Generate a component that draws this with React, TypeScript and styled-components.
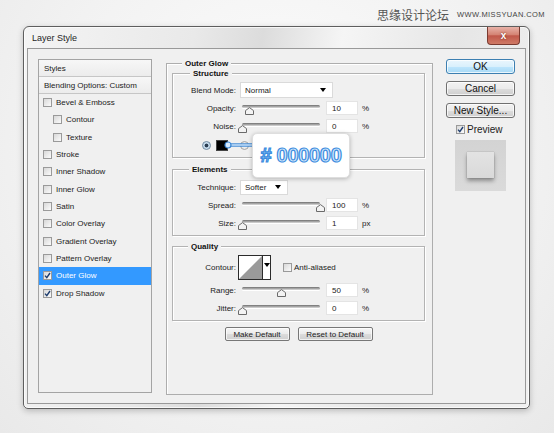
import styled, { createGlobalStyle } from "styled-components";

const GlobalStyle = createGlobalStyle`
  html, body {
    margin: 0;
    padding: 0;
  }
  body {
    font-family: "Liberation Sans", Arial, sans-serif;
    color: #222;
  }
`;

const Page = styled.div`
  width: 554px;
  height: 433px;
  overflow: hidden;
  background: radial-gradient(ellipse at 50% 35%, #fdfdfd 0%, #f2f2f2 60%, #e9e9e9 100%);
`;

const Watermark = styled.div`
  height: 26px;
  box-sizing: border-box;
  padding: 3px 9px 0 0;
  display: flex;
  justify-content: flex-end;
  align-items: center;
  gap: 8px;
`;

const WatermarkCn = styled.span`
  font-family: "Noto Sans CJK SC", sans-serif;
  font-size: 12px;
  color: #555;
`;

const WatermarkEn = styled.span`
  font-family: "Liberation Sans", Arial, sans-serif;
  font-size: 7.5px;
  letter-spacing: 0.4px;
  color: #444;
`;

const Window = styled.div`
  margin-left: 23px;
  width: 507px;
  height: 383px;
  box-sizing: border-box;
  border: 1px solid #5e5e5e;
  border-radius: 6px 6px 5px 5px;
  padding: 0 3px 4px;
  background: linear-gradient(
    100deg,
    #f4f4f4 0%,
    #e9e9e9 30%,
    #dcdcdc 42%,
    #f5f5f5 56%,
    #e6e6e6 76%,
    #f1f1f1 100%
  );
  box-shadow: 0 2px 6px rgba(0, 0, 0, 0.22), inset 0 0 0 1px rgba(255, 255, 255, 0.7);
  display: flex;
  flex-direction: column;
`;

const TitleBar = styled.div`
  height: 21px;
  display: flex;
  justify-content: space-between;
  align-items: flex-start;
  flex-shrink: 0;
`;

const Title = styled.span`
  margin: 6px 0 0 5px;
  font-size: 9px;
  line-height: 10px;
  color: #1f1f1f;
`;

const CloseButton = styled.div`
  width: 33px;
  height: 18px;
  margin-right: 6px;
  box-sizing: border-box;
  border: 1px solid #7a3a30;
  border-top: none;
  border-radius: 0 0 4px 4px;
  background: linear-gradient(#e8b2a8 0%, #d48474 45%, #c0584a 52%, #cf7a66 100%);
  color: #fff;
  font-weight: bold;
  font-size: 10px;
  display: flex;
  align-items: center;
  justify-content: center;
  text-shadow: 0 0 2px #6b1c12;
`;

const Body = styled.div`
  height: 356px;
  box-sizing: border-box;
  border: 1px solid #999;
  background: #f0f0f0;
  padding: 10px 0 0 10px;
  display: flex;
  align-items: flex-start;
`;

/* ---------- left: style list ---------- */

const StylesPanel = styled.div`
  width: 114px;
  height: 334px;
  box-sizing: border-box;
  border: 1px solid #a4a4a4;
  background: #f0f0f0;
  display: flex;
  flex-direction: column;
  flex-shrink: 0;
`;

const PanelHeader = styled.div`
  height: 17px;
  box-sizing: border-box;
  border-bottom: 1px solid #c6c6c6;
  padding-left: 5px;
  display: flex;
  align-items: center;
  font-size: 8px;
  background: linear-gradient(#f7f7f7, #ececec);
`;

const StyleItem = styled.div<{ $indent?: boolean; $selected?: boolean }>`
  height: 17.33px;
  padding-left: ${(p) => (p.$indent ? 14 : 4)}px;
  display: flex;
  align-items: center;
  gap: 4px;
  font-size: 8px;
  background: ${(p) => (p.$selected ? "#3399ff" : "transparent")};
  color: ${(p) => (p.$selected ? "#fff" : "#222")};
`;

const CheckBox = styled.span`
  width: 9px;
  height: 9px;
  box-sizing: border-box;
  border: 1px solid #9a9a9a;
  background: linear-gradient(135deg, #d8d8d8, #fbfbfb);
  display: inline-flex;
  align-items: center;
  justify-content: center;
  flex-shrink: 0;
`;

function Check({ checked }: { checked?: boolean }) {
  return (
    <CheckBox>
      {checked && (
        <svg width="7" height="7" viewBox="0 0 7 7">
          <path d="M1 3.6 L2.8 5.6 L6 1" fill="none" stroke="#1d3c6e" strokeWidth="1.4" />
        </svg>
      )}
    </CheckBox>
  );
}

const styleItems: { label: string; indent?: boolean; checked?: boolean; selected?: boolean }[] = [
  { label: "Bevel & Emboss" },
  { label: "Contour", indent: true },
  { label: "Texture", indent: true },
  { label: "Stroke" },
  { label: "Inner Shadow" },
  { label: "Inner Glow" },
  { label: "Satin" },
  { label: "Color Overlay" },
  { label: "Gradient Overlay" },
  { label: "Pattern Overlay" },
  { label: "Outer Glow", checked: true, selected: true },
  { label: "Drop Shadow", checked: true },
];

/* ---------- middle: settings ---------- */

const MiddlePanel = styled.div`
  margin: 4px 0 0 14px;
  width: 267px;
  height: 332px;
  box-sizing: border-box;
  border: 1px solid #adadad;
  box-shadow: inset 1px 1px 0 #fff;
  padding: 0 7px 0 5px;
  display: flex;
  flex-direction: column;
  flex-shrink: 0;
`;

const Legend = styled.div<{ $offset: number }>`
  align-self: flex-start;
  margin: -5px 0 0 ${(p) => p.$offset}px;
  padding: 0 3px;
  height: 10px;
  line-height: 10px;
  background: #f0f0f0;
  font-size: 8px;
  font-weight: bold;
  color: #111;
`;

const Group = styled.div<{ $mt: number }>`
  margin-top: ${(p) => p.$mt}px;
  border: 1px solid #b3b3b3;
  box-shadow: 1px 1px 0 #fff, inset 1px 1px 0 #fff;
  padding-bottom: 3px;
  display: flex;
  flex-direction: column;
`;

const Row = styled.div<{ $h?: number; $mt?: number }>`
  position: relative;
  height: ${(p) => p.$h ?? 18}px;
  margin-top: ${(p) => p.$mt ?? 0}px;
  display: flex;
  align-items: center;
  font-size: 8px;
`;

const Label = styled.span`
  width: 63px;
  margin-right: 4px;
  text-align: right;
  flex-shrink: 0;
`;

const SelectBox = styled.div<{ $w: number; $h: number }>`
  width: ${(p) => p.$w}px;
  height: ${(p) => p.$h}px;
  box-sizing: border-box;
  border: 1px solid #dadada;
  background: #fff;
  padding: 0 6px 0 4px;
  display: flex;
  align-items: center;
  justify-content: space-between;
`;

const Arrow = styled.span`
  width: 0;
  height: 0;
  border-left: 3px solid transparent;
  border-right: 3px solid transparent;
  border-top: 4px solid #000;
`;

const SliderBox = styled.div`
  position: relative;
  width: 82px;
  height: 14px;
  flex-shrink: 0;
`;

const Track = styled.div`
  position: absolute;
  left: 2px;
  right: 2px;
  top: 4px;
  height: 3px;
  border-radius: 2px;
  background: linear-gradient(#6f6f6f, #a9a9a9 55%, #dedede);
  box-shadow: 0 1px 0 #fff;
`;

const Thumb = styled.svg<{ $pos: number }>`
  position: absolute;
  top: 6px;
  left: ${(p) => 2 + p.$pos * 78 - 4.5}px;
`;

const NumInput = styled.div`
  width: 32px;
  height: 14px;
  box-sizing: border-box;
  margin-left: 4px;
  padding-left: 5px;
  border: 1px solid #e4e4e4;
  background: #fff;
  display: flex;
  align-items: center;
`;

const Unit = styled.span`
  margin-left: 4px;
`;

function Slider({ label, value, unit }: { label: string; value: number; unit: string }) {
  return (
    <Row>
      <Label>{label}</Label>
      <SliderBox>
        <Track />
        <Thumb $pos={value / 100} width="9" height="8" viewBox="0 0 9 8">
          <path d="M0.5 7.5 V3.6 L4.5 0.6 L8.5 3.6 V7.5 Z" fill="#f3f3f3" stroke="#6a6a6a" />
        </Thumb>
      </SliderBox>
      <NumInput>{value}</NumInput>
      <Unit>{unit}</Unit>
    </Row>
  );
}

const Radio = styled.span<{ $on?: boolean; $ml: number }>`
  width: 9px;
  height: 9px;
  margin-left: ${(p) => p.$ml}px;
  box-sizing: border-box;
  border-radius: 50%;
  border: 1px solid ${(p) => (p.$on ? "#6e8aa3" : "#a5a5a5")};
  background: ${(p) =>
    p.$on
      ? "radial-gradient(circle, #2a3d52 0 1.6px, #bcd3e6 2.2px, #e9f2f9 100%)"
      : "radial-gradient(circle, #fafafa, #dcdcdc)"};
  flex-shrink: 0;
`;

const Swatch = styled.span`
  width: 12px;
  height: 11px;
  margin-left: 5px;
  box-sizing: border-box;
  border: 1px solid #444;
  background: #000;
  flex-shrink: 0;
`;

const GradientBar = styled.span`
  width: 60px;
  height: 11px;
  margin-left: 4px;
  border: 1px solid #777;
  background: linear-gradient(90deg, #000, rgba(0, 0, 0, 0));
`;

const Callout = styled.svg`
  position: absolute;
  left: 51px;
  top: 4px;
  z-index: 1;
`;

const Tooltip = styled.div`
  position: absolute;
  left: 79px;
  top: -3px;
  width: 98px;
  height: 45px;
  box-sizing: border-box;
  border: 1px solid #dedede;
  border-radius: 5px;
  background: #fff;
  box-shadow: 0 1px 4px rgba(0, 0, 0, 0.25);
  display: flex;
  align-items: center;
  justify-content: center;
  z-index: 2;
`;

const HexText = styled.span`
  font-family: "Liberation Sans", Arial, sans-serif;
  font-size: 20px;
  font-weight: bold;
  color: #d2e8fc;
  -webkit-text-stroke: 1.2px #3d8ddf;
  letter-spacing: -0.3px;
`;

const ContourPicker = styled.div`
  width: 33px;
  height: 25px;
  margin-left: -2px;
  box-sizing: border-box;
  border: 1px solid #2b2b2b;
  background: #fff;
  display: flex;
`;

const ContourArrow = styled.div`
  width: 8px;
  border-left: 1px solid #2b2b2b;
  display: flex;
  justify-content: center;
  padding-top: 7px;
  box-sizing: border-box;
`;

const AntiAlias = styled.label`
  margin-left: 12px;
  display: flex;
  align-items: center;
  gap: 2px;
`;

const ButtonRow = styled.div`
  margin-top: 6px;
  display: flex;
  justify-content: center;
  gap: 8px;
`;

const SmallButton = styled.div<{ $w: number }>`
  width: ${(p) => p.$w}px;
  height: 14px;
  box-sizing: border-box;
  border: 1px solid #777;
  border-radius: 2px;
  background: linear-gradient(#f6f6f6 0%, #ebebeb 50%, #dcdcdc 51%, #cfcfcf 100%);
  box-shadow: inset 0 0 0 1px rgba(255, 255, 255, 0.7);
  font-size: 8px;
  display: flex;
  align-items: center;
  justify-content: center;
`;

/* ---------- right: buttons & preview ---------- */

const Side = styled.div`
  margin-left: 13px;
  width: 69px;
  display: flex;
  flex-direction: column;
  flex-shrink: 0;
`;

const DialogButton = styled.div<{ $primary?: boolean }>`
  height: 15px;
  box-sizing: border-box;
  margin-bottom: 7px;
  border: 1px solid ${(p) => (p.$primary ? "#3c7fb1" : "#707070")};
  border-radius: 3px;
  background: ${(p) =>
    p.$primary
      ? "linear-gradient(#eaf6fd 0%, #d9f0fc 50%, #bee6fd 51%, #a7d9f5 100%)"
      : "linear-gradient(#f2f2f2 0%, #ebebeb 50%, #dddddd 51%, #cfcfcf 100%)"};
  box-shadow: inset 0 0 0 1px rgba(255, 255, 255, 0.75);
  font-size: 10px;
  color: #111;
  display: flex;
  align-items: center;
  justify-content: center;
`;

const PreviewRow = styled.div`
  margin: -1px 0 0 10px;
  height: 10px;
  display: flex;
  align-items: center;
  gap: 2px;
  font-size: 10px;
`;

const PreviewBox = styled.div`
  margin: 6px 0 0 9px;
  width: 51px;
  height: 51px;
  background: linear-gradient(#d3d3d3, #dadada);
  display: flex;
  align-items: center;
  justify-content: center;
`;

const PreviewSquare = styled.div`
  width: 27px;
  height: 26px;
  margin-top: -2px;
  background: linear-gradient(#e3e3e3, #d9d9d9);
  box-shadow: 0 3px 4px rgba(0, 0, 0, 0.35), 0 0 1px rgba(0, 0, 0, 0.3);
`;

export default function App() {
  return (
    <Page>
      <GlobalStyle />
      <Watermark>
        <WatermarkCn>思缘设计论坛</WatermarkCn>
        <WatermarkEn>WWW.MISSYUAN.COM</WatermarkEn>
      </Watermark>
      <Window>
        <TitleBar>
          <Title>Layer Style</Title>
          <CloseButton>x</CloseButton>
        </TitleBar>
        <Body>
          <StylesPanel>
            <PanelHeader>Styles</PanelHeader>
            <PanelHeader>Blending Options: Custom</PanelHeader>
            {styleItems.map((item) => (
              <StyleItem key={item.label} $indent={item.indent} $selected={item.selected}>
                <Check checked={item.checked} />
                {item.label}
              </StyleItem>
            ))}
          </StylesPanel>

          <MiddlePanel>
            <Legend $offset={10}>Outer Glow</Legend>
            <Group $mt={4}>
              <Legend $offset={17}>Structure</Legend>
              <Row $mt={2}>
                <Label>Blend Mode:</Label>
                <SelectBox $w={93} $h={16}>
                  Normal
                  <Arrow />
                </SelectBox>
              </Row>
              <Slider label="Opacity:" value={10} unit="%" />
              <Slider label="Noise:" value={0} unit="%" />
              <Row $mt={1}>
                <Radio $on $ml={29} />
                <Swatch />
                <Radio $ml={12} />
                <GradientBar />
                <Callout width="28" height="10" viewBox="0 0 28 10">
                  <line x1="4" y1="5" x2="28" y2="5" stroke="#3a86d4" strokeWidth="3.4" />
                  <line x1="4" y1="5" x2="28" y2="5" stroke="#d6eafd" strokeWidth="1.4" />
                  <circle cx="4" cy="5" r="3" fill="#d6eafd" stroke="#3a86d4" strokeWidth="1.2" />
                </Callout>
                <Tooltip>
                  <HexText># 000000</HexText>
                </Tooltip>
              </Row>
            </Group>

            <Group $mt={11}>
              <Legend $offset={16}>Elements</Legend>
              <Row $mt={3}>
                <Label>Technique:</Label>
                <SelectBox $w={48} $h={15}>
                  Softer
                  <Arrow />
                </SelectBox>
              </Row>
              <Slider label="Spread:" value={100} unit="%" />
              <Slider label="Size:" value={1} unit="px" />
            </Group>

            <Group $mt={10}>
              <Legend $offset={15}>Quality</Legend>
              <Row $mt={2} $h={27}>
                <Label>Contour:</Label>
                <ContourPicker>
                  <svg width="23" height="23" viewBox="0 0 23 23">
                    <polygon points="0,23 23,0 23,23" fill="#9a9a9a" />
                  </svg>
                  <ContourArrow>
                    <Arrow />
                  </ContourArrow>
                </ContourPicker>
                <AntiAlias>
                  <Check />
                  Anti-aliased
                </AntiAlias>
              </Row>
              <Slider label="Range:" value={50} unit="%" />
              <Slider label="Jitter:" value={0} unit="%" />
            </Group>

            <ButtonRow>
              <SmallButton $w={65}>Make Default</SmallButton>
              <SmallButton $w={75}>Reset to Default</SmallButton>
            </ButtonRow>
          </MiddlePanel>

          <Side>
            <DialogButton $primary>OK</DialogButton>
            <DialogButton>Cancel</DialogButton>
            <DialogButton>New Style...</DialogButton>
            <PreviewRow>
              <Check checked />
              Preview
            </PreviewRow>
            <PreviewBox>
              <PreviewSquare />
            </PreviewBox>
          </Side>
        </Body>
      </Window>
    </Page>
  );
}
